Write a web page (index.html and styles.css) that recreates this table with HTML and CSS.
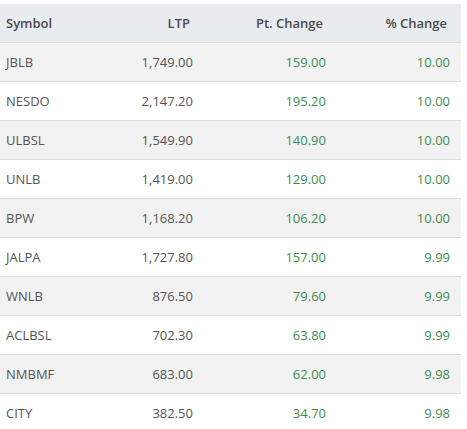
FILE: index.html
```html
<!DOCTYPE html>
<html lang="en">
<head>
    <meta charset="UTF-8">
    <meta name="viewport" content="width=device-width, initial-scale=1.0">
    <title>Top Gainers</title>
    <link rel="stylesheet" href="styles.css">
</head>
<body>
    <table class="market">
        <colgroup>
            <col class="c-sym">
            <col class="c-ltp">
            <col class="c-pt">
            <col class="c-pct">
        </colgroup>
        <thead>
            <tr>
                <th class="sym">Symbol</th>
                <th>LTP</th>
                <th>Pt. Change</th>
                <th>% Change</th>
            </tr>
        </thead>
        <tbody>
            <tr><td class="sym">JBLB</td><td>1,749.00</td><td class="up">159.00</td><td class="up">10.00</td></tr>
            <tr><td class="sym">NESDO</td><td>2,147.20</td><td class="up">195.20</td><td class="up">10.00</td></tr>
            <tr><td class="sym">ULBSL</td><td>1,549.90</td><td class="up">140.90</td><td class="up">10.00</td></tr>
            <tr><td class="sym">UNLB</td><td>1,419.00</td><td class="up">129.00</td><td class="up">10.00</td></tr>
            <tr><td class="sym">BPW</td><td>1,168.20</td><td class="up">106.20</td><td class="up">10.00</td></tr>
            <tr><td class="sym">JALPA</td><td>1,727.80</td><td class="up">157.00</td><td class="up">9.99</td></tr>
            <tr><td class="sym">WNLB</td><td>876.50</td><td class="up">79.60</td><td class="up">9.99</td></tr>
            <tr><td class="sym">ACLBSL</td><td>702.30</td><td class="up">63.80</td><td class="up">9.99</td></tr>
            <tr><td class="sym">NMBMF</td><td>683.00</td><td class="up">62.00</td><td class="up">9.98</td></tr>
            <tr><td class="sym">CITY</td><td>382.50</td><td class="up">34.70</td><td class="up">9.98</td></tr>
        </tbody>
    </table>
</body>
</html>
```

FILE: styles.css
```css
body {
    margin: 0;
    padding-top: 4px;
    background: #fff;
    font-family: "Open Sans", sans-serif;
    font-size: 13px;
}
.market {
    width: 461px;
    border-collapse: collapse;
    table-layout: fixed;
}
.c-sym { width: 90px; }
.c-ltp { width: 114px; }
.c-pt { width: 133px; }
.c-pct { width: 124px; }
.market th, .market td {
    height: 38px;
    padding: 0 11px 0 6px;
    text-align: right;
    border-bottom: 1px solid #dcdcdc;
    white-space: nowrap;
}
.market th {
    background: #e9ecef;
    color: #4a4a4a;
    font-weight: 600;
    padding-right: 14px;
}
.market td {
    color: #555;
}
.market .sym {
    text-align: left;
}
.market tbody tr:nth-child(odd) {
    background: #f2f2f2;
}
.market .up {
    color: #3c8d4e;
}
```
